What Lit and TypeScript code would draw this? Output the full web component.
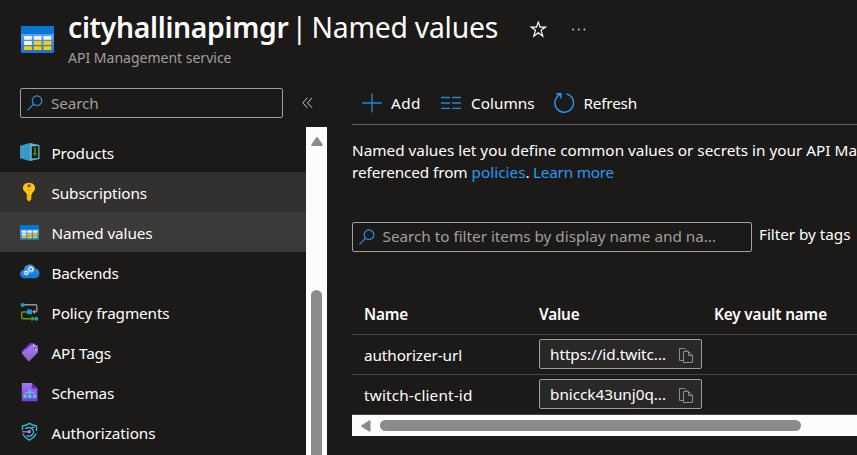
import { LitElement, html, svg, css, TemplateResult } from "lit";
import { customElement, property } from "lit/decorators.js";

/** A run of text whose tracking is adjusted so it fills a given width. */
@customElement("fit-text")
class FitText extends LitElement {
  @property({ type: Number }) w = 0;

  static styles = css`
    :host { display: inline-block; white-space: pre; }
  `;

  firstUpdated() {
    const natural = this.getBoundingClientRect().width;
    const count = (this.textContent ?? "").length;
    if (count && natural) this.style.letterSpacing = `${(this.w - natural) / count}px`;
  }

  render() {
    return html`<slot></slot>`;
  }
}

const tableIcon = (w: number, h: number) => html`
  <svg width=${w} height=${h} viewBox="0 0 33 27" preserveAspectRatio="none">
    <defs>
      <linearGradient id="tb" x1="0" y1="0" x2="0" y2="1">
        <stop offset="0.3" stop-color="#5ea0ef"></stop><stop offset="1" stop-color="#0f74d4"></stop>
      </linearGradient>
    </defs>
    <rect width="33" height="27" rx="1" fill="url(#tb)"></rect>
    <path d="M1 0h31a1 1 0 0 1 1 1v7H0V1a1 1 0 0 1 1-1z" fill="#0078d4"></path>
    ${[0, 1, 2].map((r) => [0, 1, 2].map((c) => svg`
      <rect x=${3 + c * 9.7} y=${10 + r * 5.1} width="7.9" height="3.8" rx=".5"
        fill=${r === 0 || (r === 1 && c === 0) ? "#f2f2f2" : "#ffca00"}></rect>`))}
  </svg>`;

const icon = (body: TemplateResult) => html`<svg width="20" height="20" viewBox="0 0 20 20">${body}</svg>`;

const products = icon(svg`
  <path d="M0 3.7 10 .9v18.1L0 16.3z" fill="#3999c6"></path>
  <path d="M10 .9 19.5 2.9v14l-9.5 2.1z" fill="#59b4d9"></path>
  <path d="M11.8 4.4 18.2 3.9v12l-6.4.6z" fill="#1b1a19"></path>
  <path d="M14 5.2h1.9v6.1h1.7L15 14.2l-2.6-2.9H14z" fill="#498205"></path>`);

const key = icon(svg`
  <defs><linearGradient id="ky" x1="0" y1="0" x2="0" y2="1">
    <stop offset="0" stop-color="#ffb30f"></stop><stop offset=".5" stop-color="#ffd70f"></stop><stop offset="1" stop-color="#feaa11"></stop>
  </linearGradient></defs>
  <g transform="translate(0 .7)">
  <path d="M14.2 2.3C13 .9 11.2.1 9 .1S5 .9 3.8 2.3C2.7 3.6 2.7 6.3 3.8 7.7l2.4 2.7c.4.4.6.7.6 1.2v5.3l2.2 2.2 2.7-2.7-.9-1.1 1-1.1-1-1.1 1-1.1v-.7c0-.4.2-.6.5-.9l2-2.7c1-1.4 1-4-.1-5.4z" fill="url(#ky)"></path>
  <circle cx="9" cy="3" r="1.5" fill="#6d4c16"></circle>
  <path d="M6 7.2h6v.9H6z" fill="#ff9300"></path>
  <path d="M8 11.2h.9v5.6l-.9-.8z" fill="#ff9300"></path></g>`);

const cloud = icon(svg`
  <defs><linearGradient id="cl" x1="0" y1="0" x2="0" y2="1">
    <stop offset="0" stop-color="#3c91ec"></stop><stop offset="1" stop-color="#0f78d4"></stop>
  </linearGradient></defs>
  <path d="M4.6 16.3A4.4 4.4 0 0 1 0 12C0 9.8 1.6 8.2 3.8 7.8 4.1 4.9 6.6 2.5 9.8 2.5c2.8 0 5 1.7 5.8 4.3 2.4.3 3.9 2.2 3.9 4.6 0 2.7-2.1 4.9-4.9 4.9z" fill="url(#cl)"></path>
  <g fill="none" stroke="#e8f2fd">
  <circle cx="10.8" cy="7.3" r="1.9" stroke-width="1.2"></circle>
  <circle cx="10.8" cy="7.3" r="2.9" stroke-width=".9" stroke-dasharray="1.15 1.13"></circle>
  <circle cx="6.2" cy="10.9" r="1.5" stroke-width="1.1"></circle>
  <circle cx="6.2" cy="10.9" r="2.3" stroke-width=".8" stroke-dasharray=".9 .9"></circle></g>`);

const policy = icon(svg`
  <path d="M3 2.8h12.5a1.3 1.3 0 0 1 1.3 1.3v4.5a1.2 1.2 0 0 1-1.2 1.2H14" fill="none" stroke="#949494" stroke-width="1.4"></path>
  <path d="m15 7.5-3 2.3 3 2.2z" fill="#a3a3a3"></path>
  <path d="M7 9.9H3a1.3 1.3 0 0 0-1.3 1.3v4.2a1.3 1.3 0 0 0 1.3 1.3h10" fill="none" stroke="#57a300" stroke-width="1.5"></path>
  <path d="m11.5 14 3.8 2.7-3.8 2.5z" fill="#57a300"></path>
  <rect x="7" y="7.4" width="5" height="4.8" fill="#0f9fd8"></rect>
  <circle cx="2.6" cy="2.9" r="2" fill="#0f9fd8"></circle>
  <circle cx="16.3" cy="16.7" r="2" fill="#0f9fd8"></circle>`);

const tag = icon(svg`
  <defs><linearGradient id="tg" x1="0" y1="0" x2="0" y2="1">
    <stop offset="0" stop-color="#a67af4"></stop><stop offset="1" stop-color="#8661c5"></stop>
  </linearGradient></defs>
  <path d="m1.4 9.3 8.2-7.7c.4-.4.8-.5 1.4-.5l3.5.3c.8 0 1.2.5 1.3 1.2l.3 4-8.4 8.8z" fill="#6b2fd0"></path>
  <path d="m2.2 10.2 8.8-7c.4-.3.9-.5 1.4-.4l4.2.5c.7 0 1.1.5 1.1 1.2l.3 5c0 .5-.1.9-.5 1.3l-7.6 8c-.5.5-1.2.6-1.7.1l-6-6.9c-.5-.6-.5-1.3 0-1.8z" fill="url(#tg)"></path>
  <circle cx="15" cy="6.3" r="1.1" fill="#341a6e"></circle>
  <path d="M15 5 13 1.8M15 5.8l1.2 3" stroke="#e8dcff" stroke-width=".9"></path>`);

const schema = icon(svg`
  <defs><linearGradient id="sc" x1="0" y1="0" x2="0" y2="1">
    <stop offset="0" stop-color="#a67af4"></stop><stop offset="1" stop-color="#773adc"></stop>
  </linearGradient></defs>
  <path d="M2.5.9h9.3l5.7 5.5v12.2a.7.7 0 0 1-.7.7H2.5a.7.7 0 0 1-.7-.7V1.6a.7.7 0 0 1 .7-.7z" fill="url(#sc)"></path>
  <path d="m11.8.9 5.7 5.5h-5a.7.7 0 0 1-.7-.7z" fill="#5b2bb5"></path>
  <path d="M9.7 10v5M5 15v-2.5q0-2 2-2h5.500q2 0 2 2V15" fill="none" stroke="#c5a6f5" stroke-width="1"></path>
  <g fill="#32d4c5"><rect x="7.9" y="8.2" width="3.6" height="2.9"></rect>
  <rect x="3.3" y="13" width="3.4" height="3"></rect><rect x="8" y="13" width="3.4" height="3"></rect><rect x="12.9" y="13" width="3.4" height="3"></rect></g>`);

const shield = icon(svg`
  <path d="M2.5 8.300V4C5 3.600 7.200 3 9.500 1.400 11.800 3 14 3.600 16.500 4v5M3 11.800c.8 2.600 3 4.500 6.500 6.300 3.400-1.900 5.700-3.800 6.600-6.600" fill="none" stroke="#32b0cf" stroke-width="1.400"></path>
  <path d="M5.300 6.900C7 5.200 10.500 5.100 12.200 7c1.500 1.600 1.500 4.300 0 5.800-1.600 1.500-3.800 1.600-5.500.6M11.500 6l3-1" fill="none" stroke="#50c8e8" stroke-width="1.200"></path>
  <path d="M2.200 9.800h6" stroke="#a77ac4" stroke-width="1.400"></path>
  <circle cx="9.200" cy="9.800" r="1.700" fill="#b77fd0"></circle>`);

const magnifier = html`
  <svg width="16" height="16" viewBox="0 0 16 16" fill="none" stroke="#2899f5" stroke-width="1.1">
    <circle cx="10" cy="5.7" r="4.8"></circle><path d="M6.6 9.2.5 15.3"></path>
  </svg>`;

const copyIcon = html`
  <svg class="copy" width="14" height="15" viewBox="0 0 14 15" fill="none" stroke="#8f8d8b" stroke-width="1">
    <path d="M4 12.5H.5V.5h5l3 3M4.5 3.5h5l4 4v7h-9zM9.5 3.5v4h4"></path>
  </svg>`;

const menu: { label: string; w: number; icon: TemplateResult; state?: string }[] = [
  { label: "Products", w: 62.5, icon: products },
  { label: "Subscriptions", w: 95.5, icon: key, state: "hover" },
  { label: "Named values", w: 101, icon: html`<span class="tbl">${tableIcon(19, 15)}</span>`, state: "selected" },
  { label: "Backends", w: 67, icon: cloud },
  { label: "Policy fragments", w: 118, icon: policy },
  { label: "API Tags", w: 59.5, icon: tag },
  { label: "Schemas", w: 62.5, icon: schema },
  { label: "Authorizations", w: 104, icon: shield },
];

const rows = [
  { name: "authorizer-url", nw: 98, value: "https://id.twitc..." },
  { name: "twitch-client-id", nw: 108.5, value: "bnicck43unj0q..." },
];

@customElement("app-root")
class AppRoot extends LitElement {
  static styles = css`
    :host {
      display: flex; flex-direction: column; box-sizing: border-box;
      width: 857px; height: 455px; overflow: hidden;
      background: #1b1a19; color: #fff;
      font: 15.3px/22px "Noto Sans", "Open Sans", sans-serif;
    }
    * { box-sizing: border-box; }
    svg { display: block; flex: none; }
    header { display: flex; height: 88px; flex: none; padding-left: 21px; }
    header > svg { margin-top: 26px; }
    .titles { margin-left: 14px; width: 431px; padding-top: 8px; }
    h1 { margin: 0; font-size: 28.3px; line-height: 38px; font-weight: 400; white-space: nowrap; display: flex; }
    h1 b { font-weight: 600; display: flex; }
    .bar { margin-left: 3px; }
    .sub { font-size: 14px; line-height: 20px; color: #a19f9d; margin-top: 2px; display: flex; }
    .star { margin: 21px 0 0 30px; }
    .dots { margin: 28px 0 0 25px; }
    .body { display: flex; flex: 1; min-height: 0; }
    aside { width: 327px; flex: none; display: flex; flex-direction: column; }
    .searchbar { display: flex; align-items: center; height: 30px; padding-left: 20px; flex: none; }
    .box {
      display: flex; align-items: center; gap: 8px; height: 30px; padding-left: 6px;
      border: 1px solid #a19f9d; border-radius: 2px; color: #a19f9d; overflow: hidden;
    }
    .side { width: 263px; }
    .searchbar > svg { margin-left: 19px; }
    .nav { display: flex; margin-top: 9px; flex: 1; min-height: 0; }
    ul { list-style: none; margin: 0; padding: 5px 0 0; width: 306px; overflow: hidden; }
    li { height: 40px; display: flex; align-items: center; gap: 11.5px; padding-left: 20px; }
    li fit-text { margin-top: 2px; }
    .hover { background: #323130; }
    .selected { background: #3b3a39; }
    .tbl { width: 20px; }
    .vscroll { width: 21px; background: #fcfcfc; display: flex; flex-direction: column; align-items: center; padding-top: 10px; }
    .vthumb { width: 11px; margin-top: 144px; flex: 1; background: #8b8b8b; border-radius: 6px 6px 0 0; }
    main { margin-left: 25px; width: 505px; display: flex; flex-direction: column; overflow: hidden; }
    .tools { display: flex; align-items: center; height: 37px; border-bottom: 1px solid #605e5c; padding: 0 0 6px 10px; flex: none; }
    .tools svg { margin-top: -1px; }
    .tools svg + fit-text { margin-left: 9px; }
    .tools .next { margin-left: 20px; }
    .tools .turn { margin-left: 19px; margin-right: 1px; }
    .desc { padding-top: 14px; height: 97px; flex: none; white-space: nowrap; }
    .desc > div { display: flex; height: 22px; }
    .link { color: #2899f5; }
    .filters { display: flex; gap: 7px; flex: none; }
    .filters .box { width: 400px; gap: 7.5px; }
    .filters .box fit-text { margin-top: -2px; }
    .filters > fit-text { margin-top: 1px; }
    .grid { display: grid; grid-template-columns: 175px 175px 1fr; align-items: center; height: 40px; border-bottom: 1px solid #484644; padding-left: 12px; flex: none; }
    .head { margin-top: 42px; height: 41px; font-weight: 600; }
    .grid > fit-text { justify-self: start; }
    .head > fit-text { margin-top: -1px; }
    .value { width: 163px; height: 30px; border: 1px solid #a19f9d; border-radius: 2px; background: #292827; display: flex; align-items: center; padding: 0 8px 0 10px; justify-content: space-between; margin-bottom: 1px; }
    .value .copy { margin-top: 3px; }
    .hscroll { display: flex; align-items: center; height: 21px; background: #fcfcfc; padding-left: 9px; gap: 9px; flex: none; }
    .hthumb { width: 421px; height: 11px; border-radius: 6px; background: #8b8b8b; }
  `;

  render() {
    return html`
      <header>
        ${tableIcon(33, 27)}
        <div class="titles">
          <h1><b><fit-text w="220.5">cityhallinapimgr</fit-text></b><fit-text class="bar" w="20">| </fit-text><fit-text w="186.5">Named values</fit-text></h1>
          <div class="sub"><fit-text w="163.5">API Management service</fit-text></div>
        </div>
        <svg class="star" width="18" height="18" viewBox="0 0 18 18" fill="none" stroke="#fff" stroke-width="1.2">
          <path d="m9.3 1 1.8 5.1h5.3l-4.3 3.2 1.7 5.8-4.500-3.300-4.500 3.300 1.700-5.800-4.300-3.200h5.300z"></path>
        </svg>
        <svg class="dots" width="14" height="3" viewBox="0 0 14 3" fill="#d2d0ce">
          <circle cx="1.2" cy="1.5" r=".9"></circle><circle cx="6.8" cy="1.5" r=".9"></circle><circle cx="12.4" cy="1.5" r=".9"></circle>
        </svg>
      </header>
      <div class="body">
        <aside>
          <div class="searchbar">
            <div class="box side">${magnifier}<fit-text w="47.5">Search</fit-text></div>
            <svg width="11" height="12" viewBox="0 0 11 12" fill="none" stroke="#c8c6c4" stroke-width="1">
              <path d="M5.3.8.8 5.8l4.5 5M10 .8 5.5 5.8l4.5 5"></path>
            </svg>
          </div>
          <div class="nav">
            <ul>
              ${menu.map((m) => html`<li class=${m.state ?? ""}>${m.icon}<fit-text w=${m.w}>${m.label}</fit-text></li>`)}
            </ul>
            <div class="vscroll">
              <svg width="12" height="9" viewBox="0 0 12 9" fill="#8b8b8b"><path d="M5.2.6q.8-1 1.6 0l4.8 7q.5 1.4-.8 1.4H1.2Q-.1 9 .4 7.6z"></path></svg>
              <div class="vthumb"></div>
            </div>
          </div>
        </aside>
        <main>
          <div class="tools">
            <svg width="20" height="20" viewBox="0 0 20 20" stroke="#2488d8" stroke-width="1.3"><path d="M10 .5v19M.2 10h19.6"></path></svg>
            <fit-text w="30">Add</fit-text>
            <svg class="next" width="21" height="13" viewBox="0 0 21 13" stroke="#2488d8" stroke-width="1.3"><path d="M0 1.5h9M11 1.5h9M0 7h9M11 7h9M0 12.300h9M11 12.300h9"></path></svg>
            <fit-text w="63.5">Columns</fit-text>
            <svg class="turn" width="20" height="20" viewBox="0 0 20 20" fill="none" stroke="#2899f5" stroke-width="1.4">
              <path d="M12.5.9A9.3 9.3 0 1 1 6 1.6M2 .8h4.8v4.8"></path>
            </svg>
            <fit-text w="53.5">Refresh</fit-text>
          </div>
          <div class="desc">
            <div><fit-text w="505">Named values let you define common values or secrets in your API Ma</fit-text></div>
            <div><fit-text w="119.5">referenced from </fit-text><fit-text class="link" w="54">policies</fit-text><fit-text w="7.5">. </fit-text><fit-text class="link" w="81">Learn more</fit-text></div>
          </div>
          <div class="filters">
            <div class="box">${magnifier}<fit-text w="333.5">Search to filter items by display name and na...</fit-text></div>
            <fit-text w="91.5">Filter by tags</fit-text>
          </div>
          <div class="grid head"><fit-text w="44">Name</fit-text><fit-text w="40.5">Value</fit-text><fit-text w="113">Key vault name</fit-text></div>
          ${rows.map((r) => html`
            <div class="grid">
              <fit-text w=${r.nw}>${r.name}</fit-text>
              <div class="value"><fit-text w="116">${r.value}</fit-text>${copyIcon}</div>
            </div>`)}
          <div class="hscroll">
            <svg width="10" height="12" viewBox="0 0 10 12" fill="#8b8b8b"><path d="M.6 6.8q-1-.8 0-1.6l7.5-4.8Q9.5-.1 9.5 1.2v9.6q0 1.3-1.4.8z"></path></svg>
            <div class="hthumb"></div>
          </div>
        </main>
      </div>`;
  }
}
